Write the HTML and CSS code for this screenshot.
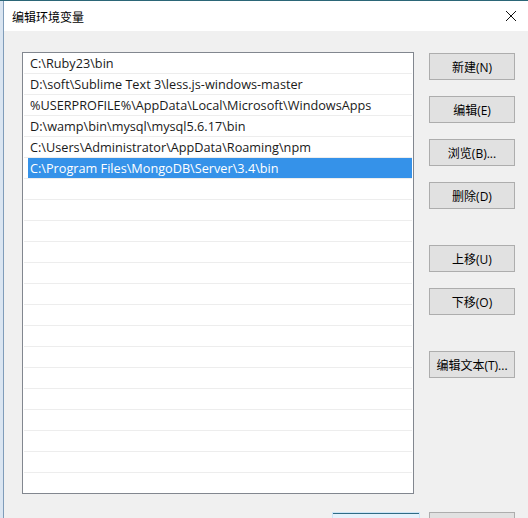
FILE: index.html
```html
<!DOCTYPE html>
<html lang="zh-CN">

<head>
    <meta charset="UTF-8">
    <meta name="viewport" content="width=device-width, initial-scale=1.0">
    <title>编辑环境变量</title>
    <link rel="stylesheet" href="styles.css">
</head>

<body>
    <div class="desktop">
        <div class="behind"></div>
        <div class="dialog">
            <div class="titlebar">
                <span class="title">编辑环境变量</span>
                <svg class="close" width="12" height="12" viewBox="0 0 12 12">
                    <path d="M1 1 L11 11 M11 1 L1 11" stroke="#111" stroke-width="1" fill="none" />
                </svg>
            </div>
            <div class="content">
                <div class="main">
                    <div class="path-list">
                        <div class="row"><span class="item">C:\Ruby23\bin</span></div>
                        <div class="row"><span class="item">D:\soft\Sublime Text 3\less.js-windows-master</span></div>
                        <div class="row"><span class="item">%USERPROFILE%\AppData\Local\Microsoft\WindowsApps</span></div>
                        <div class="row"><span class="item">D:\wamp\bin\mysql\mysql5.6.17\bin</span></div>
                        <div class="row"><span class="item">C:\Users\Administrator\AppData\Roaming\npm</span></div>
                        <div class="row"><span class="item selected">C:\Program Files\MongoDB\Server\3.4\bin</span></div>
                        <div class="row"></div>
                        <div class="row"></div>
                        <div class="row"></div>
                        <div class="row"></div>
                        <div class="row"></div>
                        <div class="row"></div>
                        <div class="row"></div>
                        <div class="row"></div>
                        <div class="row"></div>
                        <div class="row"></div>
                        <div class="row"></div>
                        <div class="row"></div>
                        <div class="row"></div>
                        <div class="row"></div>
                        <div class="row"></div>
                    </div>
                    <div class="actions">
                        <div class="group">
                            <button class="btn">新建(N)</button>
                            <button class="btn">编辑(E)</button>
                            <button class="btn">浏览(B)...</button>
                            <button class="btn">删除(D)</button>
                        </div>
                        <div class="group">
                            <button class="btn">上移(U)</button>
                            <button class="btn">下移(O)</button>
                        </div>
                        <div class="group">
                            <button class="btn">编辑文本(T)...</button>
                        </div>
                    </div>
                </div>
                <!-- OK / Cancel sit below the visible area, only their top edge shows -->
                <div class="footer">
                    <button class="btn ok"></button>
                    <button class="btn cancel"></button>
                </div>
            </div>
        </div>
    </div>
</body>

</html>
```

FILE: styles.css
```css
html,
body {
    margin: 0;
    padding: 0;
    width: 528px;
    height: 518px;
    overflow: hidden;
}

body {
    font-family: "Open Sans", "Noto Sans CJK SC", sans-serif;
    font-size: 12.7px;
    color: #000;
}

.desktop {
    display: flex;
    height: 517px;
    border-top: 1px solid #2b6677;
}

.behind {
    width: 3px;
    flex-shrink: 0;
    background-color: #dae5f1;
}

.dialog {
    flex: 1;
    display: flex;
    flex-direction: column;
    border-left: 1px solid #7f9cb9;
    background-color: #f0f0f0;
    overflow: hidden;
}

.titlebar {
    flex-shrink: 0;
    height: 30px;
    display: flex;
    align-items: center;
    justify-content: space-between;
    padding-left: 8px;
    padding-right: 11px;
    background-color: #fff;
}

.title {
    font-family: "Noto Sans CJK SC", sans-serif;
    font-size: 12px;
    color: #000;
}

.content {
    flex-shrink: 0;
    padding: 21px 13px 0 18px;
}

.main {
    display: flex;
    gap: 15px;
}

.path-list {
    width: 392px;
    height: 442px;
    box-sizing: border-box;
    border: 1px solid #82878f;
    background-color: #fff;
    padding: 0 1px;
    overflow: hidden;
}

.row {
    height: 20px;
    border-bottom: 1px solid #ededed;
    padding-left: 4px;
}

.item {
    display: block;
    height: 20px;
    line-height: 20px;
    padding-left: 2px;
    white-space: nowrap;
    color: #1a1a1a;
}

.item.selected {
    background-color: #3592e9;
    color: #fff;
}

.actions {
    display: flex;
    flex-direction: column;
    gap: 36px;
    padding-top: 1px;
}

.group {
    display: flex;
    flex-direction: column;
    gap: 16px;
}

.btn {
    width: 86px;
    height: 27px;
    padding: 0;
    border: 1px solid #adadad;
    background-color: #e1e1e1;
    font-family: "Open Sans", "Noto Sans CJK SC", sans-serif;
    font-size: 12px;
    color: #000;
}

.footer {
    display: flex;
    justify-content: flex-end;
    gap: 9px;
    margin-top: 18px;
}

.btn.ok {
    width: 88px;
    border-color: #cce4f7;
    background-color: #e5f1fb;
    box-shadow: inset 0 1px 0 #2f6c85;
}
```
